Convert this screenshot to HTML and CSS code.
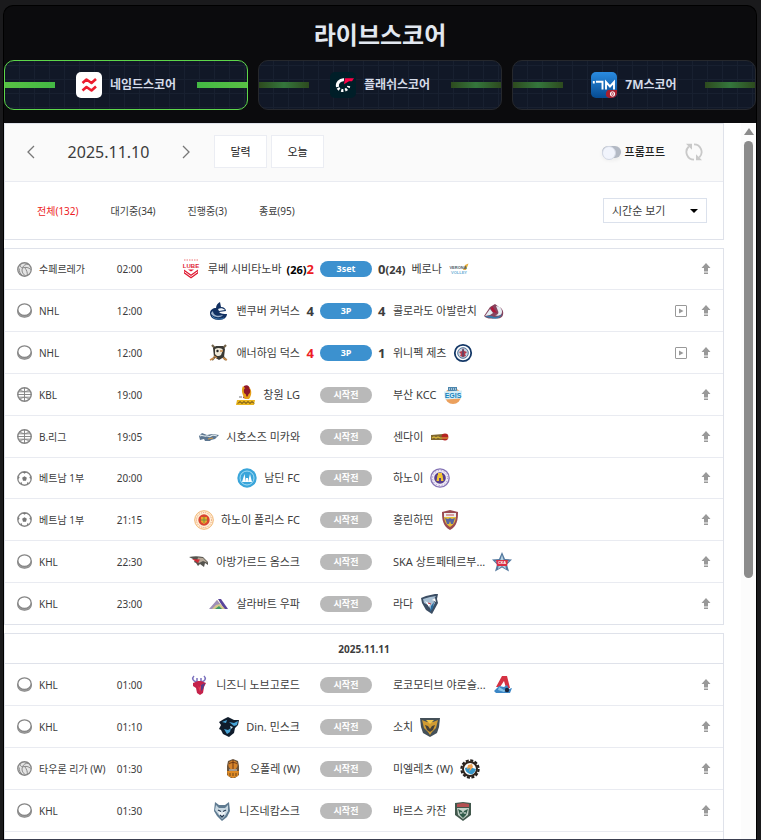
FILE: index.html
```html
<!DOCTYPE html>
<html lang="ko">
<head>
<meta charset="utf-8">
<meta name="viewport" content="width=device-width, initial-scale=1">
<title>라이브스코어</title>
<link rel="stylesheet" href="styles.css">
</head>
<body>
<svg class="sprite" aria-hidden="true">
  <symbol id="volley" viewBox="0 0 14 14"><circle cx="7" cy="7" r="6.300" fill="#e4e4e4" stroke="#858585" stroke-width="1.200"/><path d="M5.200 5.500C6 3 8 2 11 2M5.200 5.500C8 4.500 11 5 12.800 7M5.200 5.500C4 8 5 11 8 13M3 2.500C2.500 4 3.500 5 5.200 5.500M2 6c0 3 1 5 3 6.500M7 5c2 2.500 3 5 2.500 7.500" fill="none" stroke="#858585" stroke-width=".9"/></symbol>
  <symbol id="puck" viewBox="0 0 14 14"><path d="M.7 6.500v2C.7 11.500 3.500 13.300 7 13.300s6.300-1.800 6.300-4.800v-2z" fill="#a5a5a5" stroke="#858585"/><ellipse cx="7" cy="6.200" rx="6.200" ry="5.400" fill="#fff" stroke="#858585" stroke-width="1.200"/></symbol>
  <symbol id="basket" viewBox="0 0 14 14"><circle cx="7" cy="7" r="6.300" fill="#fff" stroke="#858585" stroke-width="1.300"/><path d="M7 .5v13M.5 7h13M2.500 2.500c2.500 2.300 6.500 2.300 9 0M2.500 11.500c2.500-2.300 6.500-2.300 9 0M1 4.500h12M1 9.500h12" fill="none" stroke="#858585" stroke-width=".9"/></symbol>
  <symbol id="soccer" viewBox="0 0 14 14"><circle cx="7" cy="7" r="6.300" fill="#fff" stroke="#858585" stroke-width="1.200"/><path d="M7 4.800 9.200 6.400 8.400 9H5.600L4.800 6.400zM5 1h4L7 2.500zM.7 5l1.800.5L1.500 8zM13.300 5l-1.800.5 1 2.500zM3 11l1.500-.5.5 2.300zM11 11l-1.500-.5-.5 2.300z" fill="#777"/></symbol>
  <symbol id="pin" viewBox="0 0 10 12"><path d="M5 0 9.500 5H7v3.500H3V5H.5zM3 9.500h4V11H3z" fill="#999"/></symbol>
  <symbol id="play" viewBox="0 0 12 12"><rect x=".5" y=".5" width="11" height="11" rx=".5" fill="#fff" stroke="#999"/><path d="M4 3.500 8.500 6 4 8.500z" fill="#999"/></symbol>

  <symbol id="canucks" viewBox="0 0 20 20"><path d="M1 12c0-3 3-5 6-5 0-3 2-5 4-6l1 5c3 0 5 2 5 4l-7 1c2 2 5 2 8 2 0 3-3 6-8 6-6 0-9-3-9-7z" fill="#123162"/><path d="M4 10c0 4 4 6 10 4-3 4-11 2-12-2z" fill="#9eb4cd"/><path d="M9 8c2-1 5-1 7 1l-6 1z" fill="#f2f6fa"/><path d="M3 15c2 3 8 4 12 2" stroke="#3f7cb1" fill="none"/></symbol>
  <symbol id="avalanche" viewBox="0 0 20 20"><path d="M0 15 6 6l5-3 4 3c3 1 5 4 4 8-1 3-4 4-8 3-4 1-8 1-11-2z" fill="#87445e"/><path d="M1 15 6 8l3 4-3 2zM12 5c4 0 6 3 6 6s-4 5-7 3c3 0 4-2 3-4z" fill="#e5edf2"/><path d="M1 16c4-2 7-1 9 0 3 0 6-1 8-3-1 4-7 6-11 4z" fill="#3679a8"/><path d="M8 5l5 7-4-1-2-3z" fill="#b01638"/></symbol>
  <symbol id="ducks" viewBox="0 0 20 20"><path d="M3 2l14 15M17 2 3 17" stroke="#75654c" stroke-width="2.200"/><path d="M4 5l3-2h7l2 3-1 8-5 3-5-3z" fill="#3a3934"/><path d="M6 6c3-2 7-1 8 1l-2 5c-2 2-5 1-6-1z" fill="#eee8d8"/><circle cx="8.500" cy="8" r="1.200" fill="#222"/><path d="M11 8h3M1 17l4-2m9 0l4 2M5 13l3 2" stroke="#c68848" stroke-width="1.500"/></symbol>
  <symbol id="jets" viewBox="0 0 20 20"><circle cx="10" cy="10" r="8.200" fill="#fff" stroke="#143867" stroke-width="1.800"/><circle cx="10" cy="10" r="5.300" fill="#c8d3df" stroke="#50739a"/><path d="M10 5l1.300 3L14 9l-2 2 1 2-3 1-3-1 1-2-2-2 3-1z" fill="#b73a4b"/><path d="M10 6v8" stroke="#254874"/></symbol>
  <symbol id="lg" viewBox="0 0 20 20"><path d="M8 1c3-2 6 0 6 4 1 4 0 6-2 9l-5-1 2-5-2-3z" fill="#8f172a"/><path d="M7 1c-2 4-1 8 2 13h4c3-4 3-9 0-12 0 5 0 8-2 10-2-3-1-5-1-8z" fill="#e6a018"/><circle cx="11" cy="6" r="3.200" fill="#8f172a"/><path d="M1 15h18l-1 5H0z" fill="#e9b51d"/><path d="M2 18.500l2-2 2 2 2-2 2 2 2-2 2 2 2-2 2 2" fill="none" stroke="#4a351a"/><path d="M3 12h3" stroke="#777"/></symbol>
  <symbol id="mikawa" viewBox="0 0 20 20"><path d="M0 9l3-3 5 2 5-1 7 1-4 4-4 1-1 1H6l-1-2-4 1z" fill="#5d7690"/><path d="M1 9c2-2 4 1 6 0s3 2 5 0 4 0 6 0" fill="none" stroke="#dce6ea" stroke-width="1.200"/><path d="M9 12l5-1" stroke="#d59b47"/></symbol>
  <symbol id="sendai" viewBox="0 0 20 20"><path d="M1 8l12-1 2 6H1z" fill="#80672f"/><circle cx="15" cy="10" r="3.400" fill="#b52422"/><path d="M2 11l2-1 2 1 2-1 2 1h8" fill="none" stroke="#dab83d" stroke-width="1.200"/></symbol>
  <symbol id="namdinh" viewBox="0 0 20 20"><circle cx="10" cy="10" r="9.700" fill="#3aa5da"/><circle cx="10" cy="10" r="7" fill="none" stroke="#a6def5"/><path d="M5 14l2.500-8L9 14zM11 14l2-8 2 8zM9 10h2v4H9z" fill="#fff"/></symbol>
  <symbol id="hanoi" viewBox="0 0 20 20"><circle cx="10" cy="10" r="9.200" fill="#eee9f5" stroke="#8574b5" stroke-width="1.300"/><circle cx="10" cy="10" r="5.800" fill="#563e8b"/><path d="M6.500 13l1-6h5l1 6H11v-3H9v3zM8 5h4v2H8z" fill="#f0c432"/><circle cx="10" cy="10" r="7.500" fill="none" stroke="#9b89c4" stroke-dasharray="1 2"/></symbol>
  <symbol id="police" viewBox="0 0 20 20"><circle cx="10" cy="10" r="9.300" fill="#fff2d5" stroke="#f1b371"/><circle cx="10" cy="10" r="7.500" fill="none" stroke="#ed957c" stroke-dasharray="1 1"/><circle cx="10" cy="10" r="5.700" fill="#d94532"/><path d="M7 7h6v5l-3 2-3-2z" fill="#eda62d"/><path d="M10 7v6M7 10h6" stroke="#72943e"/></symbol>
  <symbol id="hatinh" viewBox="0 0 20 20"><path d="M2 2l8-2 8 2c0 8-1 14-8 18C3 16 2 10 2 2z" fill="#9a4a51"/><path d="M4 4h12c0 6-1 10-6 13-5-3-6-7-6-13z" fill="#e6bf37"/><path d="M4 3h12v4H4z" fill="#eee"/><path d="M5 8l3 1 2-1 2 1 3-1-2 6h-2l-1-3-1 3H7z" fill="#5964a0"/><path d="M6 5h8" stroke="#c34c50"/></symbol>
  <symbol id="omsk" viewBox="0 0 20 20"><path d="M0 5c5-1 9-1 14 0l5 5v3l-3-2-1 4-4-3-2 2-2-3-2-1 1-2z" fill="#55544f"/><path d="M9 5.500l5 .5 5 5-5-2-4 2-2-2z" fill="#b7aa9a"/><path d="M3 7l8 .5-2 3.500z" fill="#cf2d36"/></symbol>
  <symbol id="salavat" viewBox="0 0 20 20"><path d="M9 5h3l7 10h-4z" fill="#5a459b"/><path d="M8 6l8 9H1z" fill="#d4c78a"/><path d="M8 6l3 4-4 1-4 4H0z" fill="#9e8fb8"/><path d="M6 15l4-3 3 3z" fill="#3b9868"/></symbol>
  <symbol id="lada" viewBox="0 0 20 20"><path d="M1 4l5-2 9-2h3l-1 5 1 4-6 11-6-4-4-7z" fill="#3b4d63"/><path d="M3 5l7-2 6-1-3 4 2 3-4 7-3-5-4-2z" fill="#a9c0d4"/><path d="M5 7l5 3-1 3zM12 6l3-2 1 4z" fill="#fff"/><path d="M11 12l3-4-1 6-3 4z" fill="#286b9f"/><path d="M8 9l3 1" stroke="#c83842"/></symbol>
  <symbol id="torpedo" viewBox="0 0 20 20"><path d="M8 7C3 6 3 3 5 1m3 6V3M12 7c5-1 5-4 3-6m-3 6V3" fill="none" stroke="#7a70bd" stroke-width="1.500"/><path d="M4 8l5-2h3l5 2-2 4-1 6-3 2-3-2-1-5-3-2z" fill="#c4224b"/><path d="M8 9l2 4 3-4-2 8z" fill="#e63c50"/><path d="M12 10l4-2-2 6-2 2z" fill="#573b87"/></symbol>
  <symbol id="loko" viewBox="0 0 20 20"><path d="M9 1h5l3 12h-4L11 6 7 12H3z" fill="#d53142"/><path d="M1 16l5-5 5 1 3-2 2 4 3-1-2 5H3z" fill="#3c87c6"/><path d="M6 12l5 3 3-1-3 3-6-2z" fill="#87c3e7"/><circle cx="14" cy="15" r="2.200" fill="#18253c"/></symbol>
  <symbol id="minsk" viewBox="0 0 20 20"><path d="M0 5l5-3 4-2 4 2 2 1 5 0-1 5-3 3-1 5-5 4-6-3-2-4-2-1 2-4z" fill="#101c2b"/><path d="M10 5l5 1 4-2-1 4-3 1zM3 5l5-2-1 3zM5 12l4 1 3-2-1 4-3 2z" fill="#47a3d5"/><path d="M11 9l3 1-2 2z" fill="#c8e7f5"/></symbol>
  <symbol id="sochi" viewBox="0 0 20 20"><path d="M0 1h20l-1 9-2 6-7 4-7-4-2-6z" fill="#445058"/><path d="M2 3l5 2h6l5-2-2 8-4 4-2 3-2-3-4-4z" fill="#cf9b33"/><path d="M5 8l3 1 2 3 2-3 3-1-2 5-3 2-3-2z" fill="#46423a"/><path d="M6 3h8l-4 4z" fill="#efc84d"/></symbol>
  <symbol id="opole" viewBox="0 0 20 20"><path d="M5 2l5-2 5 2 1 5v9l-4 3H8l-4-3V7z" fill="#6a533c"/><circle cx="10" cy="6" r="4.600" fill="#d7842b"/><path d="M6 5c2-2 6-2 8 0M10 1v9" stroke="#703914" fill="none"/><path d="M4 12h12l-1 5-5 2-5-2z" fill="#df8a23"/><path d="M6 11h8" stroke="#ddd"/><path d="M7 14v3m3-3v3m3-3v3" stroke="#6c441b"/></symbol>
  <symbol id="mielec" viewBox="0 0 20 20"><circle cx="10" cy="10" r="8.600" fill="none" stroke="#24201e" stroke-width="2.200" stroke-dasharray="3 1.500"/><circle cx="10" cy="10" r="7" fill="#fff" stroke="#30251d" stroke-width="2"/><path d="M5 9c4-1 8 0 11 1-1 4-4 6-6 5-3-1-5-3-5-6z" fill="#3697c9"/><path d="M8 6l4-1 1 3-4 5 1-4-3 1z" fill="#efa252"/></symbol>
  <symbol id="neft" viewBox="0 0 20 20"><path d="M3 1l4 3h6l4-3 1 9-3 6-5 4-5-5-3-5z" fill="#5f7b91"/><path d="M4 4l3 3h6l3-3v6l-3 5-3 3-4-5-3-4z" fill="#c8d8e2"/><path d="M6 8l3 2 1 4 1-4 3-2-2 6-2 2-3-3z" fill="#f6f9fb"/><path d="M6 9l3 1.500M14 9l-3 1.500M8 14l2 2 2-2" stroke="#223851" stroke-width="1.300" fill="none"/></symbol>
  <symbol id="bars" viewBox="0 0 20 20"><path d="M2 2l8-1 8 1v12l-8 6-8-6z" fill="#42584d"/><path d="M4 3l6-1 6 1v3H4z" fill="#b35052"/><path d="M4 7h12l-1 7-5 4-5-4z" fill="#c5d3c9"/><path d="M5 8l4 2 1 3 1-3 4-2-2 6-3 3-3-3z" fill="#315b49"/><path d="M7 12h2m2 0h2" stroke="#fff"/></symbol>
</svg>

<main class="app">
  <h1 class="title">라이브스코어</h1>
  <nav class="sources" aria-label="스코어 제공처">
    <button class="source source--active" type="button">
      <svg class="source__logo" viewBox="0 0 26 26" aria-hidden="true"><rect width="26" height="26" rx="5" fill="#fff"/><path d="M6.500 11l4-3.500 5 3.500L20 7M6.500 18.500l4-3.500 5 3.500 4.500-4" fill="none" stroke="#ec1c2e" stroke-width="2.600" stroke-linejoin="round"/></svg>
      <span>네임드스코어</span>
    </button>
    <button class="source" type="button">
      <svg class="source__logo" viewBox="0 0 26 26" aria-hidden="true"><rect width="26" height="26" rx="5" fill="#001e28"/><path d="M14 7.700A6 6 0 0 0 7.500 15" fill="none" stroke="#fff" stroke-width="3"/><path d="M7.500 15A6 6 0 0 0 18.800 14" fill="none" stroke="#fff" stroke-width="3" stroke-dasharray="2.200 1.800" stroke-dashoffset="-1"/><path d="M15 6.200h9l-2 3h-3l-5 3z" fill="#ff0046"/></svg>
      <span>플래쉬스코어</span>
    </button>
    <button class="source" type="button">
      <svg class="source__logo" viewBox="0 0 26 26" aria-hidden="true"><defs><linearGradient id="blue" x2="0" y2="1"><stop stop-color="#2a8be0"/><stop offset="1" stop-color="#064b91"/></linearGradient></defs><rect width="26" height="26" rx="5" fill="url(#blue)"/><path d="M2.800 9v2.500M5 9.800h6.500v7.700M15 17.500V10l4 4.500 4-4.500v7.500" fill="none" stroke="#fff" stroke-width="1.900"/><path d="M18 26a4 4 0 0 1 2-8h6v3a5 5 0 0 1-5 5z" fill="#a8202f"/><circle cx="21.500" cy="22" r="2.200" fill="none" stroke="#fff"/><path d="M20 20.500l3 3m0-3l-3 3" stroke="#fff" stroke-width=".8"/></svg>
      <span>7M스코어</span>
    </button>
  </nav>

  <div class="frame">
    <div class="board">
      <section class="panel">
        <div class="datebar">
          <button class="arrow" type="button" aria-label="이전 날짜"><svg viewBox="0 0 8 14" aria-hidden="true"><path d="M7 1 1 7l6 6"/></svg></button>
          <time class="today" datetime="2025-11-10">2025.11.10</time>
          <button class="arrow" type="button" aria-label="다음 날짜"><svg viewBox="0 0 8 14" aria-hidden="true"><path d="M1 1l6 6-6 6"/></svg></button>
          <div class="datebar__buttons">
            <button class="box-button" type="button">달력</button>
            <button class="box-button" type="button">오늘</button>
          </div>
          <label class="prompt"><input class="switch" type="checkbox" role="switch">프롬프트</label>
          <button class="refresh" type="button" aria-label="새로고침"><svg viewBox="0 0 18 18" aria-hidden="true"><path d="M9 16.600A7.600 7.600 0 0 1 3.800 3.500M9 1.400a7.600 7.600 0 0 1 5.200 13.100" fill="none" stroke="#c9c9c9" stroke-width="1.800"/><path d="M1 .8h6v6L5 4.800zM17 17.200h-6v-6l2 2z" fill="#c9c9c9"/></svg></button>
        </div>
        <div class="filters">
          <button class="filter filter--active" type="button">전체(132)</button>
          <button class="filter" type="button">대기중(34)</button>
          <button class="filter" type="button">진행중(3)</button>
          <button class="filter" type="button">종료(95)</button>
          <div class="sort"><select aria-label="정렬"><option>시간순 보기</option><option>리그순 보기</option></select></div>
        </div>
      </section>

      <table class="matches">
        <colgroup><col class="c-league"><col class="c-time"><col class="c-home"><col class="c-state"><col><col class="c-tools"></colgroup>
        <tbody>
        <tr>
          <td><div class="league"><svg><use href="#volley"/></svg>수페르레가</div></td><td class="time">02:00</td>
          <td><div class="team team--home"><svg viewBox="0 0 20 20" aria-hidden="true"><path d="M3 1h14" stroke="#e77" stroke-dasharray="1.500 1"/><text class="mark mark--lube" x="10" y="9">LUBE</text><path d="M3 10.500l7 5 7-5v4l-7 5-7-5z" fill="#e01b33"/><path d="M7 10.500h6l-3 2z" fill="#e01b33"/><path d="M3.500 12.800l6.500 4.700 6.500-4.700" fill="none" stroke="#fff" stroke-width=".9"/></svg><span>루베 시비타노바</span><b class="score score--lead"><small>(26)</small>2</b></div></td>
          <td><span class="state state--live">3set</span></td>
          <td><div class="team"><b class="score">0<small>(24)</small></b><span>베로나</span><svg viewBox="0 0 20 20" aria-hidden="true"><path d="M14 11l2-5 3.500-1.500L17 11z" fill="#e9ae3d"/><text class="mark mark--small" x="9" y="10" fill="#4b5b66">VERONA</text><text class="mark mark--small" x="10" y="15" fill="#6fb0d6">VOLLEY</text></svg></div></td>
          <td><div class="tools"><button type="button" aria-label="상단 고정"><svg class="pin"><use href="#pin"/></svg></button></div></td>
        </tr>
        <tr>
          <td><div class="league"><svg><use href="#puck"/></svg>NHL</div></td><td class="time">12:00</td>
          <td><div class="team team--home"><svg><use href="#canucks"/></svg><span>밴쿠버 커넉스</span><b class="score">4</b></div></td>
          <td><span class="state state--live">3P</span></td>
          <td><div class="team"><b class="score">4</b><span>콜로라도 아발란치</span><svg><use href="#avalanche"/></svg></div></td>
          <td><div class="tools"><button type="button" aria-label="중계 보기"><svg class="play"><use href="#play"/></svg></button><button type="button" aria-label="상단 고정"><svg class="pin"><use href="#pin"/></svg></button></div></td>
        </tr>
        <tr>
          <td><div class="league"><svg><use href="#puck"/></svg>NHL</div></td><td class="time">12:00</td>
          <td><div class="team team--home"><svg><use href="#ducks"/></svg><span>애너하임 덕스</span><b class="score score--lead">4</b></div></td>
          <td><span class="state state--live">3P</span></td>
          <td><div class="team"><b class="score">1</b><span>위니펙 제츠</span><svg><use href="#jets"/></svg></div></td>
          <td><div class="tools"><button type="button" aria-label="중계 보기"><svg class="play"><use href="#play"/></svg></button><button type="button" aria-label="상단 고정"><svg class="pin"><use href="#pin"/></svg></button></div></td>
        </tr>
        <tr>
          <td><div class="league"><svg><use href="#basket"/></svg>KBL</div></td><td class="time">19:00</td>
          <td><div class="team team--home"><svg><use href="#lg"/></svg><span>창원 LG</span><b class="score"></b></div></td>
          <td><span class="state">시작전</span></td>
          <td><div class="team"><b class="score"></b><span>부산 KCC</span><svg viewBox="0 0 20 20" aria-hidden="true"><circle cx="10" cy="11" r="8" fill="#eba05d"/><path d="M5 2h9v4H5z" fill="#4c86ad"/><path d="M6 4h7" stroke="#fff" stroke-dasharray="1 1"/><path d="M1 6.500l18-1-1 8-16 1z" fill="#d5edf6"/><text class="mark" x="10" y="13" fill="#1684bd">EGIS</text></svg></div></td>
          <td><div class="tools"><button type="button" aria-label="상단 고정"><svg class="pin"><use href="#pin"/></svg></button></div></td>
        </tr>
        <tr>
          <td><div class="league"><svg><use href="#basket"/></svg>B.리그</div></td><td class="time">19:05</td>
          <td><div class="team team--home"><svg><use href="#mikawa"/></svg><span>시호스즈 미카와</span><b class="score"></b></div></td>
          <td><span class="state">시작전</span></td>
          <td><div class="team"><b class="score"></b><span>센다이</span><svg><use href="#sendai"/></svg></div></td>
          <td><div class="tools"><button type="button" aria-label="상단 고정"><svg class="pin"><use href="#pin"/></svg></button></div></td>
        </tr>
        <tr>
          <td><div class="league"><svg><use href="#soccer"/></svg>베트남 1부</div></td><td class="time">20:00</td>
          <td><div class="team team--home"><svg><use href="#namdinh"/></svg><span>남딘 FC</span><b class="score"></b></div></td>
          <td><span class="state">시작전</span></td>
          <td><div class="team"><b class="score"></b><span>하노이</span><svg><use href="#hanoi"/></svg></div></td>
          <td><div class="tools"><button type="button" aria-label="상단 고정"><svg class="pin"><use href="#pin"/></svg></button></div></td>
        </tr>
        <tr>
          <td><div class="league"><svg><use href="#soccer"/></svg>베트남 1부</div></td><td class="time">21:15</td>
          <td><div class="team team--home"><svg><use href="#police"/></svg><span>하노이 폴리스 FC</span><b class="score"></b></div></td>
          <td><span class="state">시작전</span></td>
          <td><div class="team"><b class="score"></b><span>홍린하띤</span><svg><use href="#hatinh"/></svg></div></td>
          <td><div class="tools"><button type="button" aria-label="상단 고정"><svg class="pin"><use href="#pin"/></svg></button></div></td>
        </tr>
        <tr>
          <td><div class="league"><svg><use href="#puck"/></svg>KHL</div></td><td class="time">22:30</td>
          <td><div class="team team--home"><svg><use href="#omsk"/></svg><span>아방가르드 옴스크</span><b class="score"></b></div></td>
          <td><span class="state">시작전</span></td>
          <td><div class="team"><b class="score"></b><span>SKA 상트페테르부...</span><svg viewBox="0 0 20 20" aria-hidden="true"><path d="M10 0l3 7 7 .5-5 5 2 7-7-4-7 4 2-7-5-5L7 7z" fill="#54799f"/><path d="M10 3l2 6h5l-4 3 1 5-4-3-4 3 1-5-4-3h5z" fill="#b8d2e2"/><path d="M4 8h12l-1 6H5z" fill="#d92f45"/><text class="mark mark--small" x="10" y="12" fill="#fff">СКА</text></svg></div></td>
          <td><div class="tools"><button type="button" aria-label="상단 고정"><svg class="pin"><use href="#pin"/></svg></button></div></td>
        </tr>
        <tr>
          <td><div class="league"><svg><use href="#puck"/></svg>KHL</div></td><td class="time">23:00</td>
          <td><div class="team team--home"><svg><use href="#salavat"/></svg><span>살라바트 우파</span><b class="score"></b></div></td>
          <td><span class="state">시작전</span></td>
          <td><div class="team"><b class="score"></b><span>라다</span><svg><use href="#lada"/></svg></div></td>
          <td><div class="tools"><button type="button" aria-label="상단 고정"><svg class="pin"><use href="#pin"/></svg></button></div></td>
        </tr>
        </tbody>
      </table>

      <table class="matches">
        <colgroup><col class="c-league"><col class="c-time"><col class="c-home"><col class="c-state"><col><col class="c-tools"></colgroup>
        <tbody>
        <tr><th class="day" colspan="6">2025.11.11</th></tr>
        <tr>
          <td><div class="league"><svg><use href="#puck"/></svg>KHL</div></td><td class="time">01:00</td>
          <td><div class="team team--home"><svg><use href="#torpedo"/></svg><span>니즈니 노브고로드</span><b class="score"></b></div></td>
          <td><span class="state">시작전</span></td>
          <td><div class="team"><b class="score"></b><span>로코모티브 야로슬...</span><svg><use href="#loko"/></svg></div></td>
          <td><div class="tools"><button type="button" aria-label="상단 고정"><svg class="pin"><use href="#pin"/></svg></button></div></td>
        </tr>
        <tr>
          <td><div class="league"><svg><use href="#puck"/></svg>KHL</div></td><td class="time">01:10</td>
          <td><div class="team team--home"><svg><use href="#minsk"/></svg><span>Din. 민스크</span><b class="score"></b></div></td>
          <td><span class="state">시작전</span></td>
          <td><div class="team"><b class="score"></b><span>소치</span><svg><use href="#sochi"/></svg></div></td>
          <td><div class="tools"><button type="button" aria-label="상단 고정"><svg class="pin"><use href="#pin"/></svg></button></div></td>
        </tr>
        <tr>
          <td><div class="league"><svg><use href="#volley"/></svg>타우론 리가 (W)</div></td><td class="time">01:30</td>
          <td><div class="team team--home"><svg><use href="#opole"/></svg><span>오폴레 (W)</span><b class="score"></b></div></td>
          <td><span class="state">시작전</span></td>
          <td><div class="team"><b class="score"></b><span>미엘레츠 (W)</span><svg><use href="#mielec"/></svg></div></td>
          <td><div class="tools"><button type="button" aria-label="상단 고정"><svg class="pin"><use href="#pin"/></svg></button></div></td>
        </tr>
        <tr>
          <td><div class="league"><svg><use href="#puck"/></svg>KHL</div></td><td class="time">01:30</td>
          <td><div class="team team--home"><svg><use href="#neft"/></svg><span>니즈네캄스크</span><b class="score"></b></div></td>
          <td><span class="state">시작전</span></td>
          <td><div class="team"><b class="score"></b><span>바르스 카잔</span><svg><use href="#bars"/></svg></div></td>
          <td><div class="tools"><button type="button" aria-label="상단 고정"><svg class="pin"><use href="#pin"/></svg></button></div></td>
        </tr>
        <tr><td colspan="6"></td></tr>
        </tbody>
      </table>
    </div>
    <div class="scrollbar" aria-hidden="true"><i class="scrollbar__up"></i><i class="scrollbar__thumb"></i></div>
  </div>
</main>
</body>
</html>
```
FILE: styles.css
```css
* {
  box-sizing: border-box;
}

body {
  margin: 0;
  height: 100vh;
  padding: 5px 4px 0 3px;
  overflow: hidden;
  background: #1a1a1c;
  color: #3c3c3c;
  font: 11px/16px "Noto Sans", "Noto Sans CJK KR", sans-serif;
}

button,
select {
  margin: 0;
  padding: 0;
  border: 0;
  background: none;
  color: inherit;
  font: inherit;
}

svg {
  display: block;
  flex: none;
}

.sprite {
  position: absolute;
  width: 0;
  height: 0;
}

/* Lettering inside the team marks */
.mark {
  font: 700 7px "Liberation Sans", sans-serif;
  text-anchor: middle;
}

.mark--lube {
  font-size: 6px;
  fill: #e01b33;
}

.mark--small {
  font-size: 4px;
}

.app {
  display: flex;
  flex-direction: column;
  height: 100%;
  border: 1px solid #000;
  border-bottom: 0;
  border-radius: 10px 10px 0 0;
  background: #0b0b0d;
}

.title {
  margin: 11px 0 7px;
  color: #e2e8f0;
  font-size: 24px;
  line-height: 36px;
  font-weight: 700;
  text-align: center;
}

/* Source tabs */
.sources {
  display: grid;
  grid-template-columns: repeat(3, 1fr);
  gap: 10px;
  margin-bottom: 13px;
}

.source {
  display: flex;
  align-items: center;
  justify-content: center;
  gap: 8px;
  height: 50px;
  border: 1px solid #26282d;
  border-radius: 10px;
  background:
    linear-gradient(90deg, #2d4a1e, #34763c, #2d4a1e) left center / 50px 6px no-repeat,
    linear-gradient(90deg, #2d4a1e, #34763c, #2d4a1e) right center / 50px 6px no-repeat,
    repeating-linear-gradient(90deg, transparent 0 14px, #182030 14px 15px),
    repeating-linear-gradient(transparent 0 4px, #182030 4px 5px, transparent 5px 14px),
    #111827;
  color: #d5dbe8;
  font-size: 12px;
  font-weight: 700;
}

.source--active {
  border-color: #5dd64a;
  background:
    linear-gradient(90deg, #58c044, #43b944) left center / 50px 6px no-repeat,
    linear-gradient(90deg, #43b944, #58c044) right center / 50px 6px no-repeat,
    repeating-linear-gradient(90deg, transparent 0 14px, #182030 14px 15px),
    repeating-linear-gradient(transparent 0 4px, #182030 4px 5px, transparent 5px 14px),
    #111827;
}

.source__logo {
  width: 26px;
  height: 26px;
}

/* Scrolling frame */
.frame {
  display: flex;
  flex: 1;
  min-height: 0;
  overflow: hidden;
  border-bottom: 1px solid #3b3f50;
  background: #fff;
}

.board {
  flex: 1;
  min-width: 0;
  padding-right: 17px;
}

.scrollbar {
  display: flex;
  flex-direction: column;
  align-items: center;
  width: 15px;
  background: #fcfcfc;
}

.scrollbar__up {
  margin: 5px 0 6px;
  border: solid transparent;
  border-width: 0 5px 7px;
  border-bottom-color: #8b8b8b;
}

.scrollbar__thumb {
  width: 9px;
  height: 61%;
  border-radius: 5px;
  background: #8b8b8b;
}

/* Date and filters */
.panel {
  margin-bottom: 8px;
  border: 1px solid #dfe2ea;
}

.datebar {
  display: flex;
  align-items: center;
  height: 58px;
  padding: 0 20px 2px;
  border-bottom: 1px solid #e9ebf1;
  background: #fafafa;
}

.arrow svg {
  width: 8px;
  height: 14px;
  margin: 0 2px;
  fill: none;
  stroke: #777;
  stroke-width: 1.3;
}

.today {
  width: 143px;
  font-size: 16px;
  line-height: 24px;
  text-align: center;
}

.datebar__buttons {
  display: flex;
  gap: 4px;
  margin: 0 auto 0 22px;
}

.box-button {
  width: 53px;
  height: 33px;
  border: 1px solid #ebedf3;
  background: #fff;
  color: #222;
}

.prompt {
  display: flex;
  align-items: center;
  gap: 4px;
  margin-right: 20px;
  color: #222;
  font-weight: 500;
}

.switch {
  appearance: none;
  display: flex;
  width: 19px;
  height: 12px;
  margin: 0;
  border-radius: 6px;
  background: #b3b9c4;
  box-shadow: 0 2px 4px #0001;
}

.switch::before {
  content: "";
  width: 12px;
  height: 12px;
  border: 1px solid #d3d8e4;
  border-radius: 50%;
  background: #f1f4fc;
}

.switch:checked {
  justify-content: flex-end;
}

.refresh svg {
  width: 18px;
  height: 18px;
}

.filters {
  display: flex;
  align-items: center;
  height: 57px;
  gap: 32px;
  padding: 0 16px 0 32px;
}

.filter {
  font-size: 10px;
}

.filter--active {
  color: #ed1c24;
}

.sort {
  position: relative;
  margin-left: auto;
}

.sort select {
  appearance: none;
  display: block;
  width: 104px;
  height: 25px;
  padding: 0 24px 0 8px;
  border: 1px solid #dbe1ec;
  border-radius: 0;
  background: #fff;
}

.sort::after {
  content: "";
  position: absolute;
  top: 11px;
  right: 9px;
  border: solid transparent;
  border-width: 4px 4px 0;
  border-top-color: #000;
  pointer-events: none;
}

/* Match lists */
.matches {
  width: 100%;
  margin-bottom: 8px;
  table-layout: fixed;
  border: 1px solid #dfe2ea;
  border-bottom: 0;
  border-collapse: separate;
  border-spacing: 0;
}

.c-league { width: 107px; }
.c-time { width: 35px; }
.c-home { width: 167px; }
.c-state { width: 64px; }
.c-tools { width: 60px; }

.matches td {
  height: 42px;
  padding: 0;
  border-bottom: 1px solid #e9ebf1;
  white-space: nowrap;
}

.matches tr:nth-child(5n + 1) td {
  height: 41px;
}

.matches tr:last-child td {
  border-bottom-color: #dfe2ea;
}

.matches .day {
  height: 30px;
  padding: 0;
  border-bottom: 1px solid #dfe2ea;
  font-size: 10px;
  font-weight: 700;
  text-align: center;
}

.league {
  display: flex;
  align-items: center;
  gap: 7px;
  padding-left: 12px;
  font-size: 10px;
}

.league svg {
  width: 15px;
  height: 15px;
}

.matches .time {
  font-size: 10px;
  text-align: center;
}

.team {
  display: flex;
  align-items: center;
}

.team--home {
  justify-content: flex-end;
}

.team svg {
  width: 20px;
  height: 20px;
  margin: 0 7px;
}

.score {
  min-width: 15px;
  padding-right: 6px;
  font-size: 13px;
}

.team--home .score {
  min-width: 14px;
  padding: 0 0 0 5px;
  text-align: right;
}

.score small {
  font-size: 11px;
}

.score--lead {
  color: #ed1c24;
}

.score--lead small {
  color: #000;
}

.state {
  display: block;
  height: 16px;
  margin: 0 6px;
  border-radius: 8px;
  background: #b9b9b9;
  color: #fff;
  font-size: 9px;
  font-weight: 700;
  line-height: 16px;
  text-align: center;
}

.state--live {
  background: #3c91cf;
}

.tools {
  display: flex;
  align-items: center;
  justify-content: flex-end;
  gap: 14px;
  padding-right: 12px;
}

.play {
  width: 12px;
  height: 12px;
}

.pin {
  width: 10px;
  height: 12px;
}
```
